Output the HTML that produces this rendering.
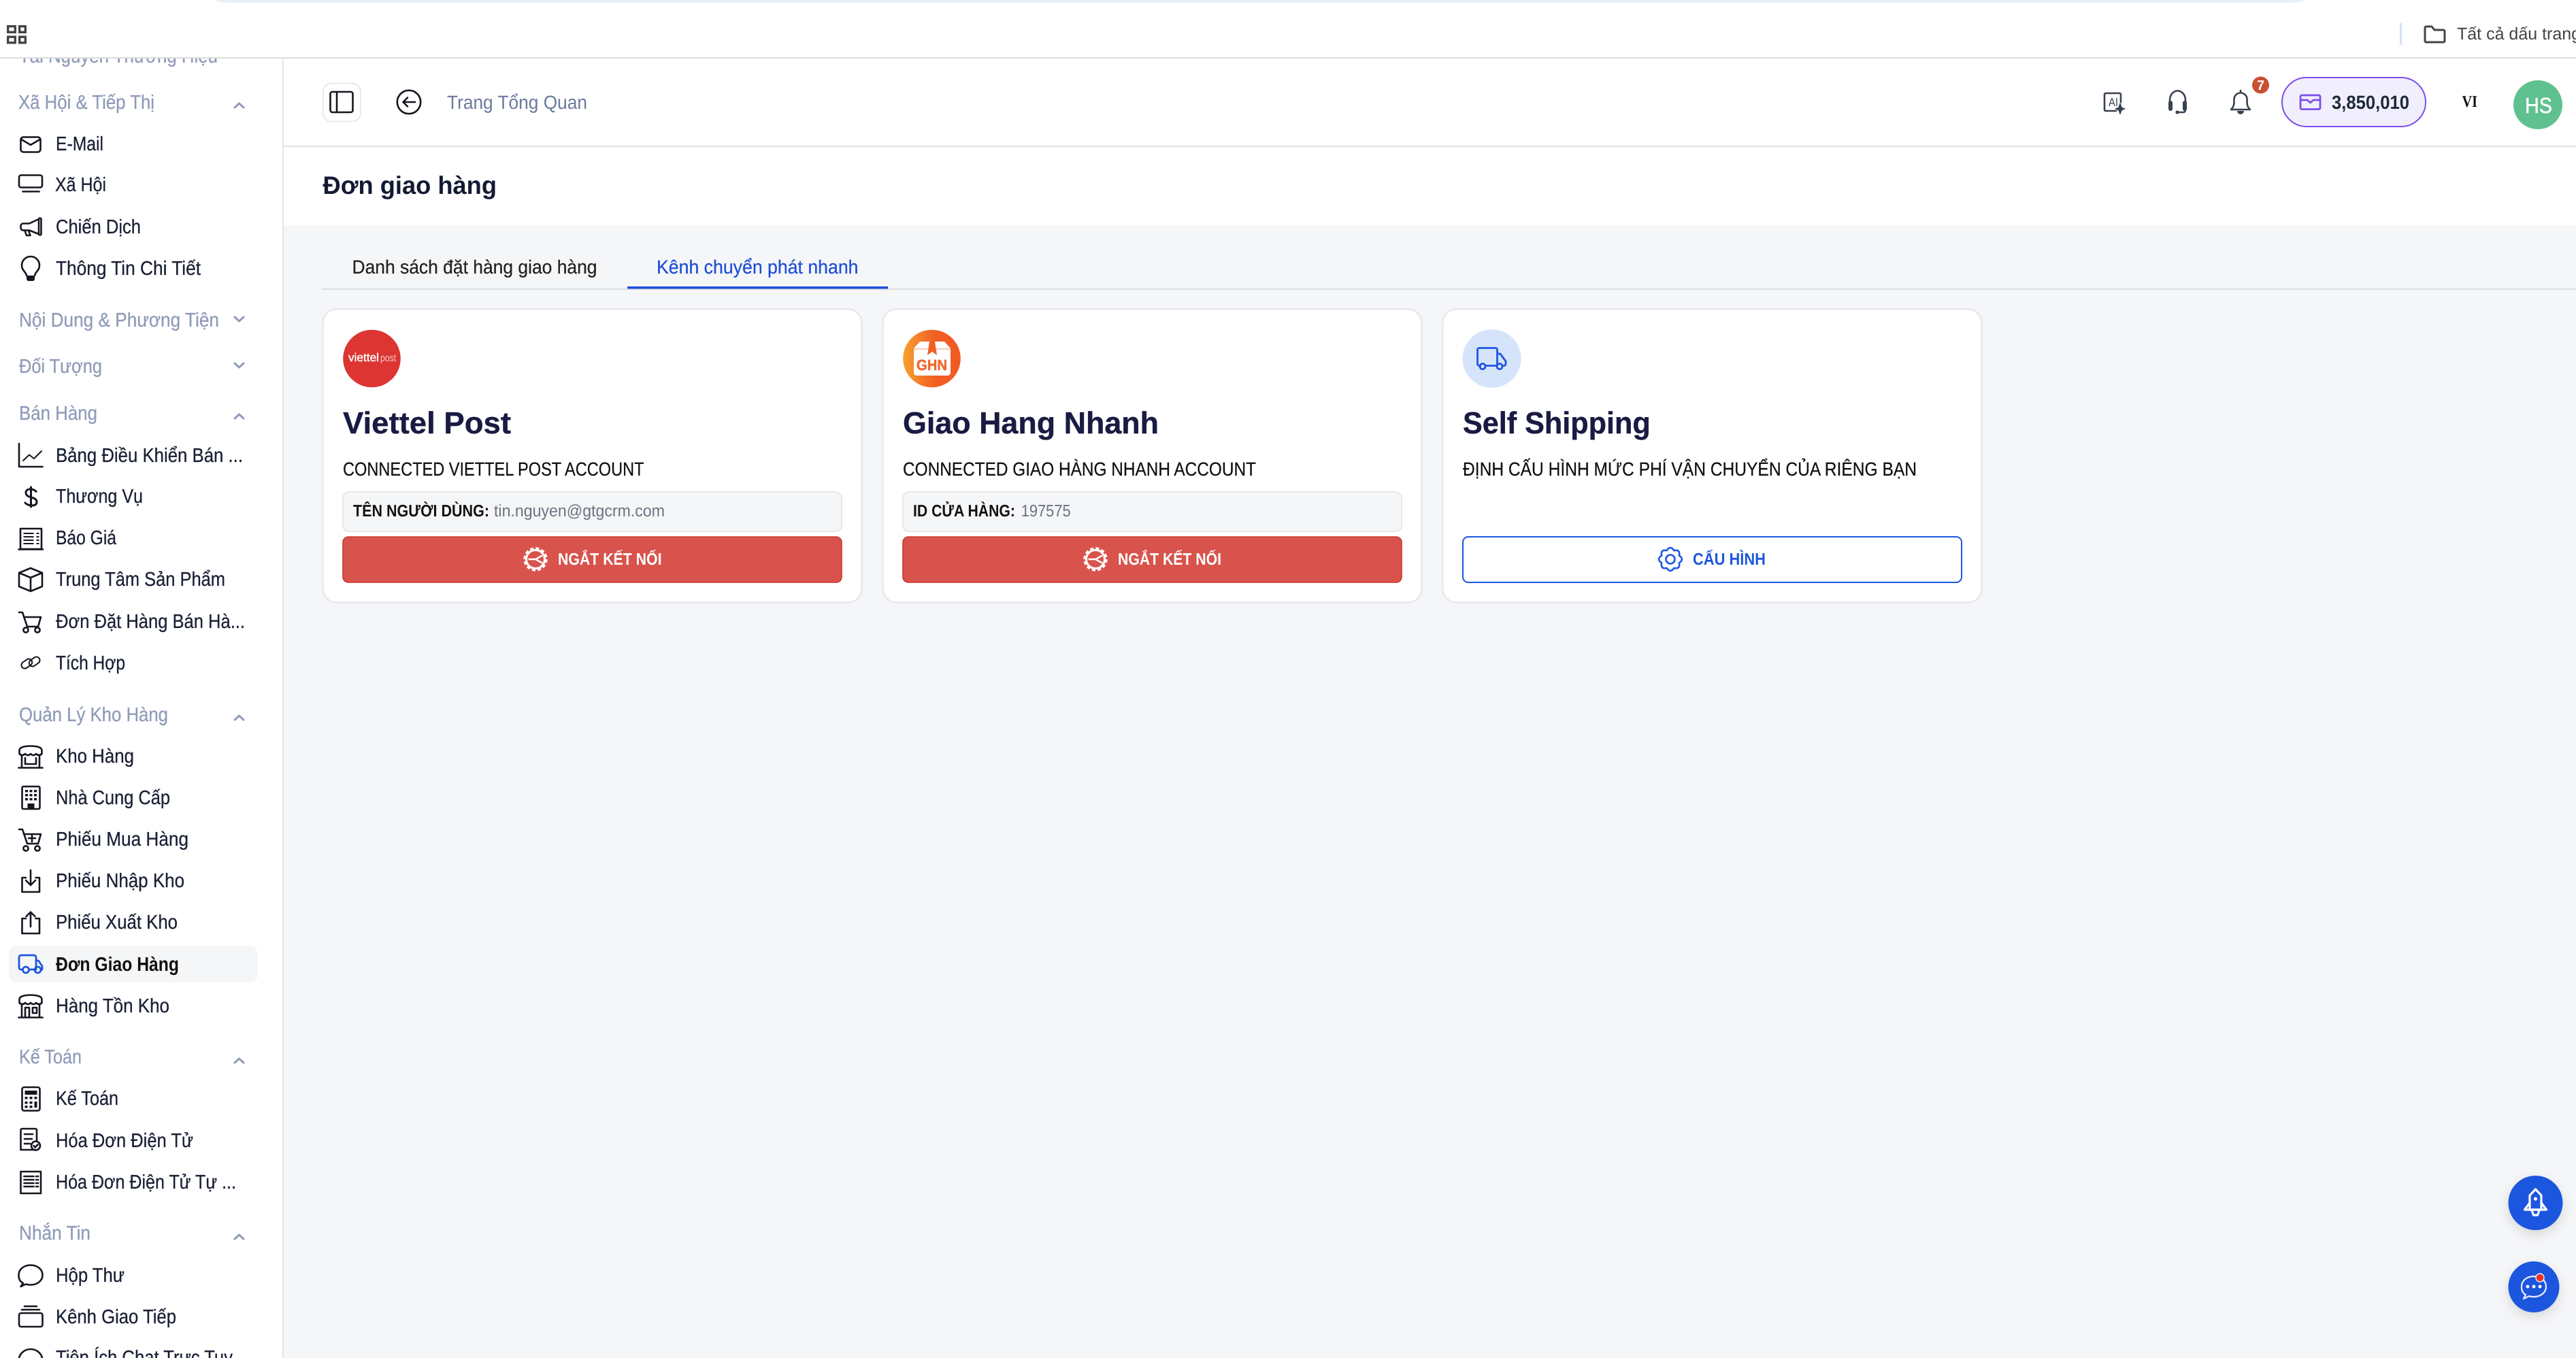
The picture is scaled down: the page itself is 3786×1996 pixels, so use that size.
<!DOCTYPE html>
<html lang="vi">
<head>
<meta charset="utf-8">
<title>Đơn giao hàng</title>
<style>
html,body{margin:0;padding:0;width:3786px;height:1996px;overflow:hidden;background:#fff}
svg{display:block}
text{font-family:"Liberation Sans","Noto Sans CJK JP",sans-serif;text-rendering:geometricPrecision}
.n{font-size:29px;fill:#1a2035;stroke:#1a2035;stroke-width:.3px}
.h{font-size:29px;fill:#8f9bb8;stroke:#8f9bb8;stroke-width:.3px}
.t{font-size:45px;font-weight:700;fill:#191b43;stroke:#191b43;stroke-width:.4px}
.u{font-size:28px;fill:#111;stroke:#111;stroke-width:.25px}
.l{font-size:24.5px;font-weight:700;fill:#111}
.v{font-size:24.5px;fill:#6b7280}
.b{font-size:24.5px;font-weight:700;fill:#fff}
.i{fill:none;stroke:#14161f;stroke-width:2.6;stroke-linecap:round;stroke-linejoin:round}
.ch{fill:none;stroke:#8f9bb8;stroke-width:3;stroke-linecap:round;stroke-linejoin:round}
.d{fill:#14161f}
</style>
</head>
<body>
<svg width="3786" height="1996" viewBox="0 0 3786 1996" xmlns="http://www.w3.org/2000/svg">
<defs>
<path id="gear" d="M12.9 -5.4Q21 0 12.9 5.4Q14.8 14.8 5.4 12.9Q0 21 -5.4 12.9Q-14.8 14.8 -12.9 5.4Q-21 0 -12.9 -5.4Q-14.8 -14.8 -5.4 -12.9Q0 -21 5.4 -12.9Q14.8 -14.8 12.9 -5.4Z"/>
<g id="wgear" fill="none" stroke="#fff">
<circle r="13.5" stroke-width="3"/>
<circle r="16" stroke-width="3.4" stroke-dasharray="5 3.4"/>
<path d="M0 0L10 -5.5M0 0L10 5.5M0 0L-10.5 0" stroke-width="2.6"/>
</g>
<filter id="sh" x="-40%" y="-40%" width="180%" height="180%"><feDropShadow dx="0" dy="6" stdDeviation="8" flood-color="#000" flood-opacity=".13"/></filter>
<linearGradient id="og" x1="0" x2="1" y1="0" y2="0"><stop offset="0" stop-color="#f7a12f"/><stop offset=".55" stop-color="#f15f24"/><stop offset="1" stop-color="#f15a22"/></linearGradient>
</defs>

<rect width="3786" height="1996" fill="#fff"/>
<!-- main bg -->
<rect x="416" y="331" width="3370" height="1665" fill="#f5f6f8"/>
<rect x="416" y="214" width="3370" height="2" fill="#e0e0e0"/>

<!-- sidebar -->
<rect x="415" y="86" width="2" height="1910" fill="#e4e6ea"/>
<text class="h" x="28" y="92" textLength="292" lengthAdjust="spacingAndGlyphs">Tài Nguyên Thương Hiệu</text>

<!-- browser bar -->
<rect x="0" y="0" width="3786" height="84" fill="#fff"/>
<rect x="0" y="84" width="3786" height="2" fill="#dedede"/>
<path d="M314 0Q322 4 334 4H3367Q3379 4 3387 0Z" fill="#e9eff8"/>
<g fill="none" stroke="#444" stroke-width="3.4">
<rect x="11.7" y="38.7" width="10.6" height="8.6"/><rect x="28.7" y="38.7" width="8.6" height="8.6"/>
<rect x="11.7" y="54.2" width="10.6" height="8.6"/><rect x="28.7" y="54.2" width="8.6" height="8.6"/>
</g>
<rect x="3527" y="34" width="3" height="32" rx="1.5" fill="#d3e0fb"/>
<path d="M3564 60V41a2 2 0 0 1 2-2h8l4 5h13a2 2 0 0 1 2 2v14a2 2 0 0 1-2 2h-25a2 2 0 0 1-2-2Z" fill="none" stroke="#444" stroke-width="3"/>
<text x="3611" y="58" font-size="25" fill="#444">Tất cả dấu trang</text>

<!-- sidebar headers -->
<text class="h" x="27" y="160" textLength="200" lengthAdjust="spacingAndGlyphs">Xã Hội &amp; Tiếp Thị</text>
<text class="h" x="28" y="480" textLength="294" lengthAdjust="spacingAndGlyphs">Nội Dung &amp; Phương Tiện</text>
<text class="h" x="28" y="548" textLength="122" lengthAdjust="spacingAndGlyphs">Đối Tượng</text>
<text class="h" x="28" y="617" textLength="115" lengthAdjust="spacingAndGlyphs">Bán Hàng</text>
<text class="h" x="28" y="1060" textLength="219" lengthAdjust="spacingAndGlyphs">Quản Lý Kho Hàng</text>
<text class="h" x="28" y="1563" textLength="92" lengthAdjust="spacingAndGlyphs">Kế Toán</text>
<text class="h" x="28" y="1822" textLength="105" lengthAdjust="spacingAndGlyphs">Nhắn Tin</text>
<path class="ch" d="M345 158L351.5 152L358 158M345 615L351.5 609L358 615M345 1058L351.5 1052L358 1058M345 1562L351.5 1556L358 1562M345 1821L351.5 1815L358 1821M345 466L351.5 472L358 466M345 534L351.5 540L358 534"/>

<!-- active highlight -->
<rect x="13" y="1390" width="366" height="54" rx="12" fill="#f5f6f8"/>

<!-- sidebar items -->
<text class="n" x="82" y="221" textLength="70" lengthAdjust="spacingAndGlyphs">E-Mail</text>
<text class="n" x="81" y="281" textLength="75" lengthAdjust="spacingAndGlyphs">Xã Hội</text>
<text class="n" x="82" y="343" textLength="125" lengthAdjust="spacingAndGlyphs">Chiến Dịch</text>
<text class="n" x="82" y="404" textLength="213" lengthAdjust="spacingAndGlyphs">Thông Tin Chi Tiết</text>
<text class="n" x="82" y="679" textLength="275" lengthAdjust="spacingAndGlyphs">Bảng Điều Khiển Bán ...</text>
<text class="n" x="82" y="739" textLength="128" lengthAdjust="spacingAndGlyphs">Thương Vụ</text>
<text class="n" x="82" y="800" textLength="89" lengthAdjust="spacingAndGlyphs">Báo Giá</text>
<text class="n" x="82" y="861" textLength="249" lengthAdjust="spacingAndGlyphs">Trung Tâm Sản Phẩm</text>
<text class="n" x="82" y="923" textLength="278" lengthAdjust="spacingAndGlyphs">Đơn Đặt Hàng Bán Hà...</text>
<text class="n" x="82" y="984" textLength="102" lengthAdjust="spacingAndGlyphs">Tích Hợp</text>
<text class="n" x="82" y="1121" textLength="115" lengthAdjust="spacingAndGlyphs">Kho Hàng</text>
<text class="n" x="82" y="1182" textLength="168" lengthAdjust="spacingAndGlyphs">Nhà Cung Cấp</text>
<text class="n" x="82" y="1243" textLength="195" lengthAdjust="spacingAndGlyphs">Phiếu Mua Hàng</text>
<text class="n" x="82" y="1304" textLength="189" lengthAdjust="spacingAndGlyphs">Phiếu Nhập Kho</text>
<text class="n" x="82" y="1365" textLength="179" lengthAdjust="spacingAndGlyphs">Phiếu Xuất Kho</text>
<text class="n" x="82" y="1427" textLength="181" lengthAdjust="spacingAndGlyphs" style="font-weight:700;fill:#111;stroke:none">Đơn Giao Hàng</text>
<text class="n" x="82" y="1488" textLength="167" lengthAdjust="spacingAndGlyphs">Hàng Tồn Kho</text>
<text class="n" x="82" y="1624" textLength="92" lengthAdjust="spacingAndGlyphs">Kế Toán</text>
<text class="n" x="82" y="1686" textLength="202" lengthAdjust="spacingAndGlyphs">Hóa Đơn Điện Tử</text>
<text class="n" x="82" y="1747" textLength="265" lengthAdjust="spacingAndGlyphs">Hóa Đơn Điện Tử Tự ...</text>
<text class="n" x="82" y="1884" textLength="101" lengthAdjust="spacingAndGlyphs">Hộp Thư</text>
<text class="n" x="82" y="1945" textLength="177" lengthAdjust="spacingAndGlyphs">Kênh Giao Tiếp</text>
<text class="n" x="82" y="2005" textLength="260" lengthAdjust="spacingAndGlyphs">Tiện Ích Chat Trực Tuy</text>

<!-- sidebar icons -->
<g class="i">
<rect x="30.5" y="201.5" width="29" height="22" rx="4"/><path d="M31.5 205L45 213L58.5 205"/>
<rect x="28" y="257.5" width="34" height="18" rx="3"/><path d="M33.5 281.5H57.5"/>
<path d="M57 322L43 328.5H34a3.5 3.5 0 0 0-3.5 3.5v3a3.5 3.5 0 0 0 3.5 3.5H43L57 344"/><rect x="57" y="320.5" width="3.5" height="25" rx="1.7"/><path d="M36.5 339l2.5 7h5.5l-2.5-7"/>
<path d="M39 405C38 399 32 398 32 390A13 13 0 0 1 58 390C58 398 52 399 51 405"/>
<path d="M28 652V686H62.5"/>
<path d="M34 677L43 668.5L50 674L61 663" stroke-width="2"/>
<path d="M53 722.5C50 718 38 717 38 724C38 733 54 729 54 738C54 745 41 744 37 739M45.5 716V745" stroke-width="3"/>
<path d="M30 777H61V807H30ZM27.5 807.5H63"/>
<path d="M34.5 784H49.5M34.5 789H49.5M34.5 794H49.5M34.5 799H49.5M53.5 784H57.5M53.5 789H57.5M53.5 794H57.5M53.5 799H57.5" stroke-width="2" stroke-linecap="butt"/>
<path d="M45 835L62 842V862L45 869L28 862V842ZM28 842L45 849L62 842M45 849V869"/>
<path d="M28 900H33L40 921H56L60 907H35"/><circle cx="38" cy="926" r="3.6"/><circle cx="55" cy="926" r="3.6"/>
<g transform="rotate(-35 45 974)" stroke-width="2"><rect x="31" y="967" width="17" height="10" rx="5"/><rect x="42" y="971" width="17" height="10" rx="5"/></g>
<path d="M28.5 1108V1103C28.5 1098 37 1096.5 45 1096.5C53 1096.5 61.5 1098 61.5 1103V1108Q57.3 1112 53 1108Q49 1112 45 1108Q41 1112 37 1108Q32.7 1112 28.5 1108ZM32 1111V1128M58 1111V1128M27.5 1128.5H62.5M37 1114V1123H53V1114"/>
<rect x="32.5" y="1156" width="26" height="33" rx="2"/>
<path d="M28 1219H33L40 1240H56L60 1226H35M47 1227V1237M42 1232H52"/><circle cx="38" cy="1247" r="3.6"/><circle cx="55" cy="1247" r="3.6"/>
<path d="M38 1290H32.5V1311H58V1290H52.5M45 1279V1301M38 1294L45 1301L52 1294"/>
<path d="M38 1350H32.5V1372H58V1350H52.5M45 1341V1362M38.5 1347L45 1340.5L51.5 1347"/>
<path d="M28.5 1474V1469C28.5 1464 37 1462.5 45 1462.5C53 1462.5 61.5 1464 61.5 1469V1474Q57.3 1478 53 1474Q49 1478 45 1474Q41 1478 37 1474Q32.7 1478 28.5 1474ZM32 1477V1495M58 1477V1495M27.5 1495.5H62.5M37 1495V1481H43V1495M48 1481H54V1489H48Z"/>
<rect x="32.5" y="1598" width="26" height="34.5" rx="3"/>
<path d="M53 1690H30.5V1661a2 2 0 0 1 2-2H52a2 2 0 0 1 2 2V1676M36 1667H48M36 1674H47M36 1681H44"/><circle cx="52.5" cy="1684" r="6.5"/><path d="M49.5 1684l2.3 2.3 3.8-4"/>
<path d="M30.5 1722H60V1754H30.5ZM35.5 1729H49.5M35.5 1734H49.5M35.5 1739H49.5M35.5 1744H49.5M53 1729H56M53 1734H56M53 1739H56M53 1744H56"/>
<path d="M34 1886C28 1883 27.5 1878 27.5 1874C27.5 1865 36 1859.5 45 1859.5C54 1859.5 62.5 1865 62.5 1874C62.5 1883 54 1888.5 45 1888.5C42 1888.5 40 1888 38 1887.5L30.5 1891Z"/>
<rect x="28" y="1930" width="34.5" height="20" rx="3"/><path d="M32 1925H58M36 1920H54"/>
<ellipse cx="45" cy="2000" rx="17.5" ry="17"/>
</g>
<path d="M39 405h12v5a3 3 0 0 1-3 3h-6a3 3 0 0 1-3-3Z" class="d"/>
<g class="d">
<rect x="37" y="1161" width="4" height="3.4"/><rect x="43.5" y="1161" width="4" height="3.4"/><rect x="50" y="1161" width="4" height="3.4"/>
<rect x="37" y="1167" width="4" height="3.4"/><rect x="43.5" y="1167" width="4" height="3.4"/><rect x="50" y="1167" width="4" height="3.4"/>
<rect x="37" y="1173" width="4" height="3.4"/><rect x="43.5" y="1173" width="4" height="3.4"/><rect x="50" y="1173" width="4" height="3.4"/>
<rect x="40.5" y="1181" width="10" height="8"/>
<rect x="36.5" y="1603" width="18" height="6"/>
<rect x="36.5" y="1612" width="4" height="3.5"/><rect x="43.5" y="1612" width="4" height="3.5"/><rect x="50.5" y="1612" width="4" height="3.5"/>
<rect x="36.5" y="1619" width="4" height="3.5"/><rect x="43.5" y="1619" width="4" height="3.5"/><rect x="50.5" y="1619" width="4" height="9"/>
<rect x="36.5" y="1625" width="4" height="3.5"/><rect x="43.5" y="1625" width="4" height="3.5"/>
</g>
<g fill="none" stroke="#1d56de" stroke-width="2.8" stroke-linecap="round" stroke-linejoin="round">
<path d="M33.5 1425H31a3 3 0 0 1-3-3V1407a3 3 0 0 1 3-3H50a3 3 0 0 1 3 3V1425H43M53 1412H56.5L62 1420V1424a2 2 0 0 1-2 2"/>
<circle cx="38" cy="1425.5" r="4.5"/><circle cx="55.5" cy="1425.5" r="4.5"/>
</g>

<!-- top header -->
<rect x="475" y="122.5" width="55" height="56" rx="12" fill="#fff" stroke="#e3e5ea" stroke-width="1.6"/>
<g class="i">
<rect x="485.5" y="135" width="33" height="30" rx="3"/><path d="M495 135V165"/>
<circle cx="601" cy="150" r="17.2"/><path d="M610 150H592.5M599 143.5L592.5 150L599 156.5"/>
</g>
<text x="657" y="160" font-size="28" fill="#6b7a9c" textLength="206" lengthAdjust="spacingAndGlyphs">Trang Tổng Quan</text>

<!-- AI / headset / bell -->
<g fill="none" stroke="#374151" stroke-width="2.6" stroke-linecap="round" stroke-linejoin="round">
<path d="M3110 163H3095a2 2 0 0 1-2-2V139a2 2 0 0 1 2-2H3115a2 2 0 0 1 2 2V150"/>
<path d="M3189 155V147A11.5 13.5 0 0 1 3212 147V155M3212 161V162a3 3 0 0 1-3 3H3202"/>
<path d="M3279 161C3285 155 3283 150 3283.5 146A9.5 9.5 0 0 1 3302.5 146C3303 150 3301 155 3307 161ZM3293 136V133"/>
</g>
<text x="3099" y="156" font-size="17" fill="#374151" textLength="14" lengthAdjust="spacingAndGlyphs">AI</text>
<path d="M3116 150L3118.5 157.500L3124 160L3118.5 162.500L3116 169L3113.500 162.500L3108 160L3113.500 157.500Z" fill="#374151"/>
<rect x="3187" y="148" width="6" height="15" rx="3" fill="#374151"/><rect x="3208" y="148" width="6" height="15" rx="3" fill="#374151"/>
<circle cx="3200" cy="165" r="2.6" fill="#374151"/>
<path d="M3288 163h10a5 5 0 0 1-10 0Z" fill="#374151"/>
<circle cx="3322.5" cy="125" r="12.5" fill="#c94f31"/>
<text x="3322.500" y="132" font-size="20" font-weight="700" fill="#fff" text-anchor="middle">7</text>

<rect x="3354" y="114" width="211" height="72" rx="36" fill="#f1effd" stroke="#7c4dea" stroke-width="2"/>
<g fill="none" stroke="#7c4dea" stroke-width="2.8" stroke-linejoin="round">
<rect x="3381" y="140" width="29" height="20.500" rx="2"/>
<path d="M3381 147H3391L3395.500 151L3400 147H3410"/>
</g>
<text x="3427" y="160" font-size="28" font-weight="700" fill="#1f2937" textLength="114" lengthAdjust="spacingAndGlyphs">3,850,010</text>
<text x="3618.500" y="157" font-size="24" font-weight="700" fill="#111" style="font-family:'Liberation Serif',serif" textLength="22.500" lengthAdjust="spacingAndGlyphs">VI</text>
<circle cx="3730" cy="154" r="36" fill="#5fc18f"/>
<text x="3711" y="166" font-size="32" fill="#fff" stroke="#fff" stroke-width=".5" textLength="40" lengthAdjust="spacingAndGlyphs">HS</text>

<!-- page title -->
<text x="474.500" y="285" font-size="37" font-weight="700" fill="#131a33" textLength="255.500" lengthAdjust="spacingAndGlyphs">Đơn giao hàng</text>

<!-- tabs -->
<text x="517.500" y="402" font-size="28" fill="#222" stroke="#222" stroke-width=".25" textLength="360" lengthAdjust="spacingAndGlyphs">Danh sách đặt hàng giao hàng</text>
<text x="965" y="402" font-size="28" fill="#1d4ed8" stroke="#1d4ed8" stroke-width=".25" textLength="296.500" lengthAdjust="spacingAndGlyphs">Kênh chuyển phát nhanh</text>
<rect x="474" y="424" width="3312" height="2" fill="#dcdde1"/>
<rect x="922" y="421" width="383" height="3.500" fill="#1d4ed8"/>

<!-- card 1 -->
<rect x="474.500" y="454.500" width="792" height="431" rx="20" fill="#fff" stroke="#e2e4e9" stroke-width="2"/>
<circle cx="546.500" cy="527" r="42.300" fill="#dc3532"/>
<text x="512" y="531" font-size="17" fill="#fff" stroke="#fff" stroke-width=".4" textLength="45" lengthAdjust="spacingAndGlyphs">viettel</text>
<text x="559" y="531" font-size="15" fill="#f6c9c8" textLength="23" lengthAdjust="spacingAndGlyphs">post</text>
<text class="t" x="504" y="637" textLength="247" lengthAdjust="spacingAndGlyphs">Viettel Post</text>
<text class="u" x="504" y="699" textLength="442.500" lengthAdjust="spacingAndGlyphs">CONNECTED VIETTEL POST ACCOUNT</text>
<rect x="504" y="723" width="733" height="58" rx="9" fill="#f5f6f8" stroke="#e5e7eb" stroke-width="2"/>
<text class="l" x="519" y="759" textLength="200" lengthAdjust="spacingAndGlyphs">TÊN NGƯỜI DÙNG:</text>
<text class="v" x="726" y="759" textLength="251" lengthAdjust="spacingAndGlyphs">tin.nguyen@gtgcrm.com</text>
<rect x="504" y="789" width="733" height="67" rx="8" fill="#d9534d" stroke="#c9382f" stroke-width="1.600"/>
<use href="#wgear" x="787" y="822"/>
<text class="b" x="820" y="830" textLength="152.500" lengthAdjust="spacingAndGlyphs">NGẮT KẾT NỐI</text>

<!-- card 2 -->
<rect x="1297.500" y="454.500" width="792" height="431" rx="20" fill="#fff" stroke="#e2e4e9" stroke-width="2"/>
<circle cx="1369.500" cy="527" r="42.300" fill="url(#og)"/>
<path d="M1343 512L1352 502H1388L1397 512V548a4 4 0 0 1-4 4H1347a4 4 0 0 1-4-4Z" fill="#fff"/>
<rect x="1343" y="512" width="54" height="1.800" fill="#f7c6ac"/>
<path d="M1366 502H1374L1377 522L1370 517L1363 522Z" fill="#f15f24"/>
<text x="1347" y="544" font-size="22" font-weight="700" fill="#f1682a" stroke="#f1682a" stroke-width=".5" textLength="45" lengthAdjust="spacingAndGlyphs">GHN</text>
<text class="t" x="1327" y="637" textLength="376" lengthAdjust="spacingAndGlyphs">Giao Hang Nhanh</text>
<text class="u" x="1327" y="699" textLength="519" lengthAdjust="spacingAndGlyphs">CONNECTED GIAO HÀNG NHANH ACCOUNT</text>
<rect x="1327" y="723" width="733" height="58" rx="9" fill="#f5f6f8" stroke="#e5e7eb" stroke-width="2"/>
<text class="l" x="1342" y="759" textLength="150" lengthAdjust="spacingAndGlyphs">ID CỬA HÀNG:</text>
<text class="v" x="1500.700" y="759" textLength="73" lengthAdjust="spacingAndGlyphs">197575</text>
<rect x="1327" y="789" width="733" height="67" rx="8" fill="#d9534d" stroke="#c9382f" stroke-width="1.600"/>
<use href="#wgear" x="1610" y="822"/>
<text class="b" x="1643" y="830" textLength="152" lengthAdjust="spacingAndGlyphs">NGẮT KẾT NỐI</text>

<!-- card 3 -->
<rect x="2120.500" y="454.500" width="792" height="431" rx="20" fill="#fff" stroke="#e2e4e9" stroke-width="2"/>
<circle cx="2192.500" cy="527" r="43" fill="#d6e4fb"/>
<g fill="none" stroke="#1d56de" stroke-width="2.800" stroke-linecap="round" stroke-linejoin="round">
<path d="M2175.500 537.500H2174a2.500 2.500 0 0 1-2.500-2.500V514a2.500 2.500 0 0 1 2.500-2.500H2198a2.500 2.500 0 0 1 2.500 2.500V537.500H2183M2200.500 520H2205L2213 531V535a2.500 2.500 0 0 1-2.500 2.500H2210"/>
<circle cx="2179" cy="538.500" r="4"/><circle cx="2204" cy="538.500" r="4"/>
</g>
<text class="t" x="2150" y="637" textLength="275.700" lengthAdjust="spacingAndGlyphs">Self Shipping</text>
<text class="u" x="2150" y="699" textLength="667" lengthAdjust="spacingAndGlyphs">ĐỊNH CẤU HÌNH MỨC PHÍ VẬN CHUYỂN CỦA RIÊNG BẠN</text>
<rect x="2150" y="789" width="733" height="67" rx="8" fill="#fff" stroke="#1d56de" stroke-width="2"/>
<g fill="none" stroke="#1d56de" stroke-width="2.600">
<use href="#gear" x="2455" y="822"/>
<circle cx="2455" cy="822" r="6.500"/>
</g>
<text class="b" x="2488" y="830" textLength="107" lengthAdjust="spacingAndGlyphs" style="fill:#1d56de">CẤU HÌNH</text>

<!-- floating buttons -->
<circle cx="3726.500" cy="1768" r="40" fill="#1d56de" filter="url(#sh)"/>
<g fill="none" stroke="#fff" stroke-width="3.200" stroke-linejoin="round" stroke-linecap="round">
<path d="M3726.500 1748L3718 1757V1778H3735V1757Z"/>
<path d="M3718 1768L3710.500 1778H3742.500L3735 1768"/>
<path d="M3721 1779L3723.500 1786H3729.500L3732 1779"/>
</g>
<circle cx="3726.500" cy="1762" r="2.600" fill="#fff"/>
<circle cx="3724" cy="1891.500" r="37.500" fill="#1d56de" filter="url(#sh)"/>
<path d="M3712 1903C3707 1900 3706 1896 3706 1891C3706 1882 3714 1876 3724 1876C3734 1876 3742 1882 3742 1891C3742 1900 3734 1906 3724 1906C3721 1906 3719 1906 3717 1905L3709 1909Z" fill="none" stroke="#e9eefc" stroke-width="2.200" stroke-linejoin="round"/>
<circle cx="3715" cy="1891" r="2.500" fill="#fff"/><circle cx="3724" cy="1891" r="2.500" fill="#fff"/><circle cx="3733" cy="1891" r="2.500" fill="#fff"/>
<circle cx="3733" cy="1878" r="6" fill="#ee2f25" stroke="#e9eefc" stroke-width="1.400"/>
</svg>
</body>
</html>
